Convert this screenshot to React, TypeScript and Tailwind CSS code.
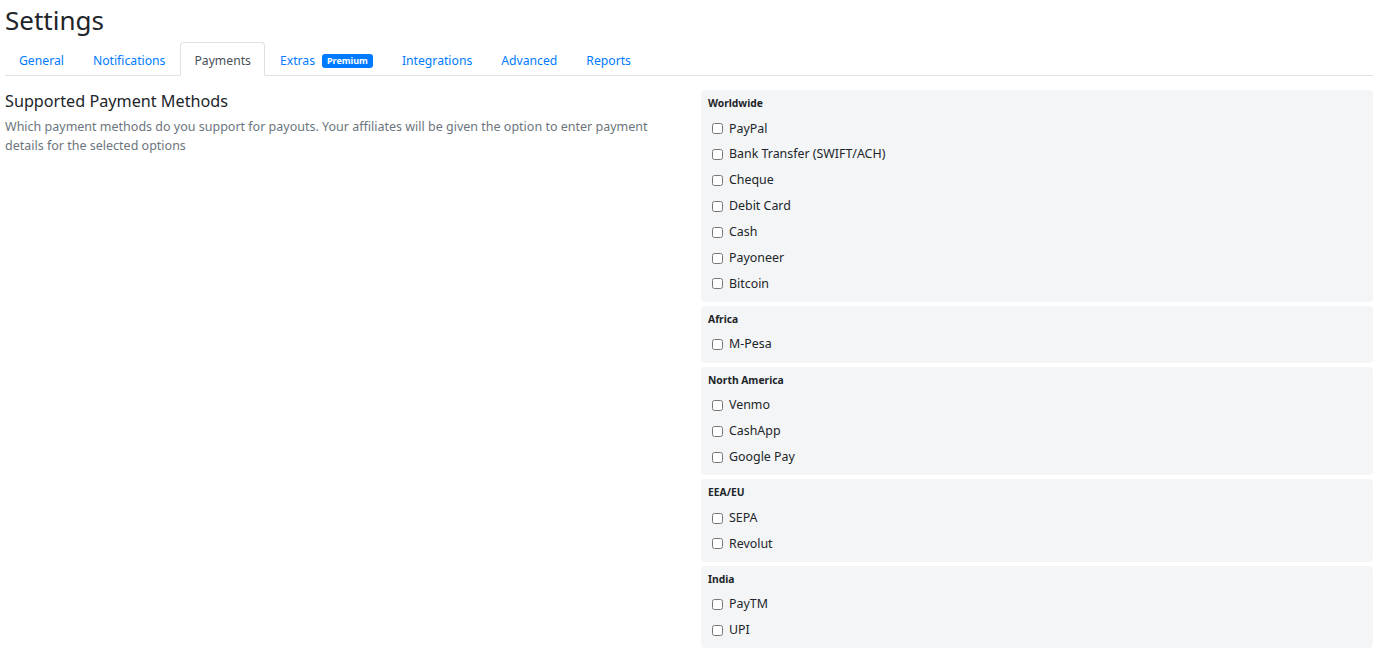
import React from "react";

const tabs = [
  { label: "General" },
  { label: "Notifications" },
  { label: "Payments", active: true },
  { label: "Extras", badge: "Premium" },
  { label: "Integrations" },
  { label: "Advanced" },
  { label: "Reports" },
];

const regions = [
  {
    title: "Worldwide",
    methods: ["PayPal", "Bank Transfer (SWIFT/ACH)", "Cheque", "Debit Card", "Cash", "Payoneer", "Bitcoin"],
  },
  { title: "Africa", methods: ["M-Pesa"] },
  { title: "North America", methods: ["Venmo", "CashApp", "Google Pay"] },
  { title: "EEA/EU", methods: ["SEPA", "Revolut"] },
  { title: "India", methods: ["PayTM", "UPI"] },
];

export default function App() {
  return (
    <div
      className="min-h-[653px] bg-white px-[5px] pt-[3px] text-[#212529]"
      style={{ fontFamily: '"Noto Sans", "Open Sans", sans-serif' }}
    >
      <h1 className="mb-[5px] text-[26px] leading-[34px] font-normal">Settings</h1>

      <ul className="flex border-b border-[#dee2e6] text-[12.2px]">
        {tabs.map((tab) => (
          <li key={tab.label} className="-mb-px mr-px">
            <a
              href="#"
              className={
                tab.active
                  ? "flex h-[34px] items-center rounded-t border border-[#dee2e6] border-b-white bg-white px-[13px] pt-[4px] text-[#495057]"
                  : "flex h-[34px] items-center border border-transparent px-[13px] pt-[4px] text-[#007bff]"
              }
            >
              {tab.label}
              {tab.badge && (
                <span className="ml-[7px] rounded-[3px] bg-[#007bff] px-[5px] text-[9px] leading-[14px] font-bold text-white">
                  {tab.badge}
                </span>
              )}
            </a>
          </li>
        ))}
      </ul>

      <div className="mt-[14px] flex gap-4">
        <div className="min-w-0 flex-1">
          <h2 className="text-[16.2px] leading-[22px] font-normal">Supported Payment Methods</h2>
          <p className="mt-[5px] text-[12.5px] leading-[19px] text-[#6c757d]">
            Which payment methods do you support for payouts. Your affiliates will be given the option to enter payment
            details for the selected options
          </p>
        </div>

        <div className="flex w-[672px] flex-col gap-1">
          {regions.map((region) => (
            <div key={region.title} className="rounded bg-[#f4f5f7] pt-[5px] pb-[6px] pl-[7px]">
              <div className="h-4 text-[10.3px] leading-4 font-bold">{region.title}</div>
              <div className="mt-1">
                {region.methods.map((m) => (
                  <label key={m} className="flex h-[25.83px] items-center pt-[2px] text-[12.4px] text-[#212529]">
                    <input type="checkbox" className="mr-[6px] ml-[4px] h-[11px] w-[11px]" />
                    {m}
                  </label>
                ))}
              </div>
            </div>
          ))}
        </div>
      </div>
    </div>
  );
}
